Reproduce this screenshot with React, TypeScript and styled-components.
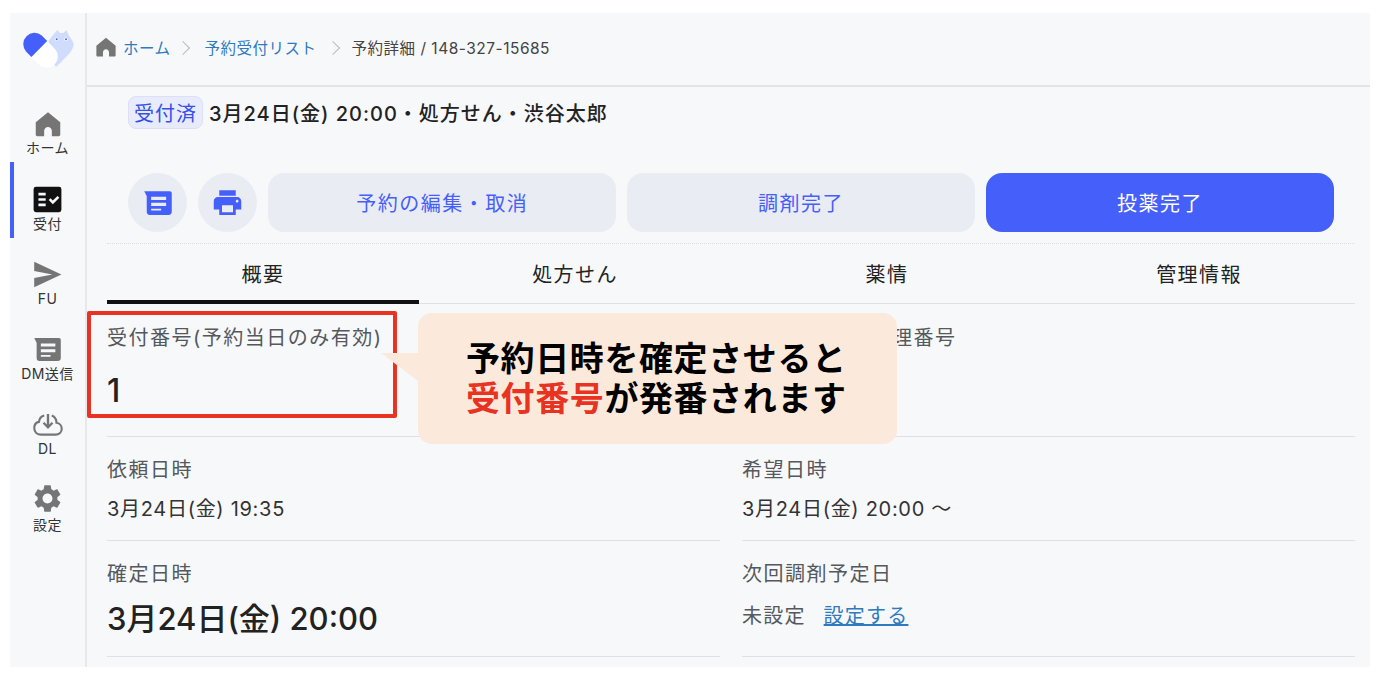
import React from "react";
import styled, { createGlobalStyle } from "styled-components";

const GlobalStyle = createGlobalStyle`
  html, body {
    margin: 0;
    background: #ffffff;
    font-family: Inter, "Noto Sans CJK JP", "Noto Sans", sans-serif;
    color: #25282b;
  }
  * { box-sizing: border-box; }
`;

const navItems = [
  { label: "ホーム", icon: "home", size: 28 },
  { label: "受付", icon: "check", size: 29, active: true },
  { label: "FU", icon: "send", size: 29 },
  { label: "DM送信", icon: "dm", size: 29 },
  { label: "DL", icon: "cloud", size: 30 },
  { label: "設定", icon: "gear", size: 33 },
];

const tabs = ["概要", "処方せん", "薬情", "管理情報"];

function Icon({ name, size, color }: { name: string; size: number; color: string }) {
  const box = { width: size, height: size, viewBox: "0 0 24 24", fill: color };
  switch (name) {
    case "home":
      return (
        <svg {...box}>
          <path d="M12 2 1.500 10.600v10.400c0 .8.600 1.400 1.400 1.400h5.800v-4.400c0-2 1.400-3.500 3.300-3.500s3.300 1.500 3.300 3.500v4.400h5.800c.8 0 1.400-.6 1.400-1.400V10.600z" />
        </svg>
      );
    case "check":
      return (
        <svg {...box}>
          <path
            fillRule="evenodd"
            d="M2.500 1.500h19A2 2 0 0 1 23.500 3.500v17a2 2 0 0 1-2 2h-19a2 2 0 0 1-2-2v-17a2 2 0 0 1 2-2zM4.500 6.500v2.200h6V6.500zm0 4.400v2.200h6v-2.200zm0 4.500v2.200h6v-2.200zM13 12.500l1.500-1.500 1.900 1.900 3.900-3.900 1.500 1.500-5.400 5.400z"
          />
        </svg>
      );
    case "send":
      return (
        <svg {...box}>
          <path d="M1 22.500 23.500 12 1 1.500v7.700L16 12 1 14.800z" />
        </svg>
      );
    case "dm":
      return (
        <svg {...box}>
          <path
            fillRule="evenodd"
            d="M1 2.500h20.500A1.500 1.500 0 0 1 23 4v15a2.500 2.500 0 0 1-2.500 2.500h-15A2.500 2.500 0 0 1 3 19V6.500zM6.500 7v2.500h12V7zm0 4.800v2.500h12v-2.500zm0 4.700V18h8v-1.500z"
          />
        </svg>
      );
    case "cloud":
      return (
        <svg {...box} fill="none" stroke={color} strokeWidth="1.700">
          <path d="M9 5.200C6.500 5.900 5 7.800 4.800 10.300 2.300 10.800 1 13 1 15.200 1 18.500 3.500 20.500 6.500 20.500H18c3 0 5-2 5-4.700 0-2.600-2-4.500-4.200-4.800 0-2.500-1.300-4.800-3.800-5.800" />
          <path d="M12 4v10" strokeWidth="1.900" />
          <path d="m8.400 11 3.600 3.700 3.600-3.700" strokeWidth="1.900" />
        </svg>
      );
    case "gear":
      return (
        <svg {...box}>
          <path d="M19.140 12.940c.04-.3.06-.61.06-.94 0-.32-.02-.64-.07-.94l2.030-1.580c.18-.14.23-.41.12-.61l-1.920-3.320c-.12-.22-.37-.29-.59-.22l-2.390.96c-.5-.38-1.030-.7-1.620-.94l-.36-2.540c-.04-.24-.24-.41-.48-.41h-3.840c-.24 0-.43.17-.47.41l-.36 2.540c-.59.24-1.130.57-1.620.94l-2.390-.96c-.22-.08-.47 0-.59.22L2.740 8.870c-.12.21-.08.47.12.61l2.030 1.580c-.05.3-.09.63-.09.94s.02.64.07.94l-2.030 1.580c-.18.14-.23.41-.12.61l1.920 3.320c.12.22.37.29.59.22l2.390-.96c.5.38 1.030.7 1.620.94l.36 2.540c.05.24.24.41.48.41h3.840c.24 0 .44-.17.47-.41l.36-2.540c.59-.24 1.130-.56 1.620-.94l2.390.96c.22.08.47 0 .59-.22l1.920-3.320c.12-.22.07-.47-.12-.61l-2.010-1.580zM12 15.600c-1.980 0-3.600-1.620-3.600-3.600s1.620-3.600 3.600-3.600 3.600 1.620 3.600 3.600-1.620 3.600-3.600 3.600z" />
        </svg>
      );
    case "print":
      return (
        <svg {...box}>
          <path d="M19 8H5c-1.660 0-3 1.340-3 3v6h4v4h12v-4h4v-6c0-1.660-1.340-3-3-3zm-3 11H8v-5h8v5zm3-7c-.55 0-1-.45-1-1s.45-1 1-1 1 .45 1 1-.45 1-1 1zm-1-9H6v4h12V3z" />
        </svg>
      );
    default:
      return null;
  }
}

function Logo() {
  return (
    <svg width="52" height="42" viewBox="0 0 52 42">
      <path d="M26.700 10.700 31 5 35.300 0 38 3h3.500L44.300 0 47 6q5 6 4.700 9-.7 4-4.700 9L34.300 36.700 26 28z" fill="#cfdcfb" />
      <circle cx="34.700" cy="9.300" r="1.700" fill="#ffffff" />
      <circle cx="34.700" cy="9.300" r="1" fill="#4a5ef5" />
      <circle cx="44" cy="9.300" r="1.700" fill="#ffffff" />
      <circle cx="44" cy="9.300" r="1" fill="#4a5ef5" />
      <path d="M9.400 26.900 25.200 11 33.200 19.200A11.200 11.200 0 0 1 17.400 35z" fill="#ffffff" />
      <path d="M9.400 26.900 25.200 11 19.800 5.600A11.200 11.200 0 0 0 4 21.400z" fill="#4560fa" />
    </svg>
  );
}

export default function App() {
  return (
    <>
      <GlobalStyle />
      <Page>
        <Frame>
          <Sidebar>
            <LogoArea>
              <Logo />
            </LogoArea>
            {navItems.map((item) => (
              <NavItem key={item.label} $active={item.active}>
                <Icon
                  name={item.icon}
                  size={item.size}
                  color={item.active ? "#111111" : "#757575"}
                />
                <NavLabel>{item.label}</NavLabel>
              </NavItem>
            ))}
          </Sidebar>
          <Main>
            <Breadcrumb>
              <Icon name="home" size={22} color="#757575" />
              <CrumbLink>ホーム</CrumbLink>
              <CrumbArrow $before={7} />
              <CrumbLink>予約受付リスト</CrumbLink>
              <CrumbArrow $before={11} />
              <CrumbCurrent>予約詳細 / 148-327-15685</CrumbCurrent>
            </Breadcrumb>
            <Content>
              <StatusRow>
                <StatusBadge>受付済</StatusBadge>
                <StatusText>3月24日(金) 20:00・処方せん・渋谷太郎</StatusText>
              </StatusRow>
              <ActionRow>
                <RoundButton>
                  <Icon name="dm" size={30} color="#4560fa" />
                </RoundButton>
                <RoundButton>
                  <Icon name="print" size={33} color="#4560fa" />
                </RoundButton>
                <ActionButton>予約の編集・取消</ActionButton>
                <ActionButton>調剤完了</ActionButton>
                <ActionButton $primary>投薬完了</ActionButton>
              </ActionRow>
              <TabBar>
                {tabs.map((tab, i) => (
                  <Tab key={tab} $active={i === 0}>
                    {tab}
                  </Tab>
                ))}
              </TabBar>
              <DetailGrid>
                <Cell $height={132}>
                  <CellLabel>受付番号(予約当日のみ有効)</CellLabel>
                  <NumberValue>1</NumberValue>
                </Cell>
                <Cell $height={132}>
                  <CoveredLabel>理番号</CoveredLabel>
                </Cell>
                <Cell $height={104}>
                  <CellLabel>依頼日時</CellLabel>
                  <CellValue>3月24日(金) 19:35</CellValue>
                </Cell>
                <Cell $height={104}>
                  <CellLabel>希望日時</CellLabel>
                  <CellValue>3月24日(金) 20:00 〜</CellValue>
                </Cell>
                <Cell $height={116}>
                  <CellLabel>確定日時</CellLabel>
                  <LargeValue>3月24日(金) 20:00</LargeValue>
                </Cell>
                <Cell $height={116}>
                  <CellLabel>次回調剤予定日</CellLabel>
                  <PlanRow>
                    <Unset>未設定</Unset>
                    <SetLink>設定する</SetLink>
                  </PlanRow>
                </Cell>
              </DetailGrid>
            </Content>
            <Highlight />
            <Callout>
              <CalloutLine>予約日時を確定させると</CalloutLine>
              <CalloutLine>
                <Accent>受付番号</Accent>が発番されます
              </CalloutLine>
            </Callout>
          </Main>
        </Frame>
      </Page>
    </>
  );
}

const Page = styled.div`
  width: 1382px;
  height: 680px;
  padding: 13px 12px 13px 10px;
  overflow: hidden;
`;

const Frame = styled.div`
  display: flex;
  height: 654px;
  background: #f7f8fa;
  overflow: hidden;
`;

const Sidebar = styled.nav`
  width: 77px;
  flex-shrink: 0;
  border-right: 2px solid #e6e8ec;
`;

const LogoArea = styled.div`
  height: 74px;
  padding: 17px 0 0 12px;
`;

const NavItem = styled.div<{ $active?: boolean }>`
  height: 75.300px;
  display: flex;
  flex-direction: column;
  align-items: center;
  justify-content: flex-end;
  gap: 1px;
  padding-bottom: 5px;
  border-left: 4px solid ${({ $active }) => ($active ? "#4560fa" : "transparent")};
  margin-right: 4px;
`;

const NavLabel = styled.span`
  font-size: 14px;
  line-height: 18px;
  letter-spacing: 0.400px;
  color: #333333;
`;

const Main = styled.main`
  position: relative;
  flex: 1;
  min-width: 0;
`;

const Breadcrumb = styled.div`
  height: 74px;
  display: flex;
  align-items: center;
  padding: 0 0 4px 8px;
  border-bottom: 2px solid #e2e4e9;
`;

const CrumbLink = styled.a`
  margin-left: 6px;
  font-size: 15.500px;
  letter-spacing: 0.500px;
  color: #2f7abf;
`;

const CrumbArrow = styled.span<{ $before: number }>`
  width: 10px;
  height: 10px;
  margin: 2px 11px 0 ${({ $before }) => $before}px;
  border-top: 1.500px solid #b9bcc2;
  border-right: 1.500px solid #b9bcc2;
  transform: rotate(45deg);
`;

const CrumbCurrent = styled.span`
  margin-left: 3px;
  font-size: 15.500px;
  letter-spacing: 0.500px;
  color: #444444;
`;

const Content = styled.div`
  padding: 0 15px 0 20px;
`;

const StatusRow = styled.div`
  display: flex;
  align-items: center;
  gap: 6px;
  height: 34px;
  margin: 8px 0 0 21px;
`;

const StatusBadge = styled.span`
  height: 33px;
  padding: 0 5px;
  display: flex;
  align-items: center;
  font-size: 20px;
  letter-spacing: 1px;
  color: #3550e8;
  background: #e8ebfb;
  border: 1px solid #dbe0f8;
  border-radius: 8px;
`;

const StatusText = styled.span`
  font-size: 20px;
  letter-spacing: 1px;
  font-weight: 500;
  color: #222222;
`;

const ActionRow = styled.div`
  display: flex;
  gap: 11.200px;
  margin: 44px 0 0 21px;
  height: 59px;
`;

const RoundButton = styled.button`
  width: 59px;
  height: 59px;
  flex-shrink: 0;
  display: flex;
  align-items: center;
  justify-content: center;
  padding: 0;
  border: none;
  border-radius: 50%;
  background: #e9ecf2;
`;

const ActionButton = styled.button<{ $primary?: boolean }>`
  width: 347.700px;
  height: 59px;
  flex-shrink: 0;
  border: none;
  border-radius: 16px;
  font-family: inherit;
  font-size: 20px;
  letter-spacing: 1.500px;
  color: ${({ $primary }) => ($primary ? "#ffffff" : "#4560fa")};
  background: ${({ $primary }) => ($primary ? "#4560fa" : "#e9ecf2")};
`;

const TabBar = styled.div`
  display: grid;
  grid-template-columns: repeat(4, 1fr);
  margin-top: 11px;
  border-top: 1px dotted #dcdee3;
  border-bottom: 1px solid #dfe1e6;
`;

const Tab = styled.div<{ $active?: boolean }>`
  height: 60px;
  padding-top: 16px;
  text-align: center;
  font-size: 20px;
  line-height: 30px;
  letter-spacing: 1.400px;
  color: #222222;
  border-bottom: 4px solid ${({ $active }) => ($active ? "#111111" : "transparent")};
  margin-bottom: -1px;
`;

const DetailGrid = styled.div`
  display: grid;
  grid-template-columns: 613px 613px;
  column-gap: 22px;
  margin-top: 1px;
`;

const Cell = styled.div<{ $height: number }>`
  height: ${({ $height }) => $height}px;
  display: flex;
  flex-direction: column;
  padding-top: 18px;
  border-bottom: 1px solid #dfe1e6;
`;

const CellLabel = styled.div`
  font-size: 20px;
  line-height: 30px;
  letter-spacing: 1.500px;
  color: #55585c;
`;

const CoveredLabel = styled(CellLabel)`
  padding-left: 150px;
`;

const NumberValue = styled.div`
  margin-top: 16px;
  font-size: 32px;
  line-height: 44px;
  font-weight: 500;
  color: #222222;
`;

const CellValue = styled.div`
  margin-top: 9px;
  font-size: 20px;
  line-height: 30px;
  letter-spacing: 0.700px;
  color: #333333;
`;

const LargeValue = styled.div`
  margin-top: 8px;
  font-size: 31px;
  line-height: 44px;
  font-weight: 500;
  color: #222222;
`;

const PlanRow = styled.div`
  display: flex;
  gap: 18px;
  margin-top: 12px;
  font-size: 20px;
  line-height: 30px;
  letter-spacing: 1.200px;
`;

const Unset = styled.span`
  color: #55585c;
`;

const SetLink = styled.a`
  color: #2f7abf;
  text-decoration: underline;
`;

const Highlight = styled.div`
  position: absolute;
  left: 0;
  top: 298px;
  width: 310px;
  height: 107px;
  border: 4px solid #e83323;
  border-radius: 2px;
`;

const Callout = styled.div`
  position: absolute;
  left: 331px;
  top: 300px;
  width: 479px;
  height: 131px;
  display: flex;
  flex-direction: column;
  justify-content: center;
  padding-left: 48px;
  background: #fbeadb;
  border-radius: 14px;

  &::before {
    content: "";
    position: absolute;
    left: -37px;
    top: 40px;
    border-style: solid;
    border-width: 0 37px 28px 0;
    border-color: transparent #fbeadb transparent transparent;
  }
`;

const CalloutLine = styled.div`
  font-size: 34px;
  line-height: 40px;
  font-weight: 700;
  letter-spacing: 0.600px;
  color: #000000;
  white-space: nowrap;
`;

const Accent = styled.span`
  color: #e83323;
`;
